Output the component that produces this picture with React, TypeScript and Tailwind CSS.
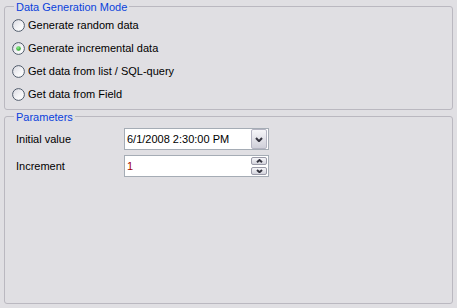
import React from "react";

function Radio({ checked }: { checked?: boolean }) {
  return (
    <svg width="13" height="13" viewBox="0 0 13 13" className="shrink-0">
      <defs>
        <linearGradient id="rfill" x1="0" y1="0" x2="1" y2="1">
          <stop offset="0" stopColor="#d8d8e0" />
          <stop offset="0.6" stopColor="#f6f6f8" />
          <stop offset="1" stopColor="#ffffff" />
        </linearGradient>
        <radialGradient id="rdot" cx="0.4" cy="0.35" r="0.7">
          <stop offset="0" stopColor="#8ff08f" />
          <stop offset="1" stopColor="#1a9a1a" />
        </radialGradient>
      </defs>
      <circle cx="6.5" cy="6.5" r="5.9" fill="url(#rfill)" stroke="#4f5a6a" strokeWidth="1" />
      {checked && <circle cx="6.5" cy="6.5" r="2.3" fill="url(#rdot)" />}
    </svg>
  );
}

function Chevron({ w, h, up, sw = 1.8 }: { w: number; h: number; up?: boolean; sw?: number }) {
  return (
    <svg width={w} height={h} viewBox={`0 0 ${w} ${h}`}>
      {up ? (
        <path d={`M1 ${h - 0.8} L${w / 2} 1 L${w - 1} ${h - 0.8}`} fill="none" stroke="#34343f" strokeWidth={sw} />
      ) : (
        <path d={`M1 1 L${w / 2} ${h - 0.8} L${w - 1} 1`} fill="none" stroke="#34343f" strokeWidth={sw} />
      )}
    </svg>
  );
}

const options = [
  { label: "Generate random data", checked: false },
  { label: "Generate incremental data", checked: true },
  { label: "Get data from list / SQL-query", checked: false },
  { label: "Get data from Field", checked: false },
];

export default function App() {
  return (
    <div className="w-[457px] h-[308px] bg-[#e0dfe3] px-[4px] pb-[4px] flex flex-col font-['Liberation_Sans',Arial,sans-serif] text-[11px] text-black">
      <fieldset className="h-[110px] shrink-0 border border-[#bab8c0] rounded-[3px]">
        <legend className="ml-[9px] px-[2px] pt-[2px] leading-[10px] text-[#0a3fdc]">Data Generation Mode</legend>
        <div className="pt-[2px] pl-[7px] flex flex-col">
          {options.map((o) => (
            <div key={o.label} className="h-[23px] flex items-center gap-[3px]">
              <Radio checked={o.checked} />
              <span className="leading-[13px]">{o.label}</span>
            </div>
          ))}
        </div>
      </fieldset>
      <fieldset className="flex-1 border border-[#bab8c0] rounded-[3px]">
        <legend className="ml-[9px] px-[2px] pt-[2px] leading-[10px] text-[#0a3fdc]">Parameters</legend>
        <div className="pt-[6px] pl-[11px] flex flex-col gap-[5px]">
          <div className="flex items-center">
            <span className="w-[108px] leading-[13px]">Initial value</span>
            <div className="w-[145px] h-[22px] bg-white border border-[#a5acb5] flex items-center pl-[2px] pr-[1px]">
              <span className="flex-1 leading-[13px]">6/1/2008 2:30:00 PM</span>
              <div className="w-[16px] h-[20px] rounded-[2px] border border-[#b4b4c2] bg-gradient-to-b from-[#f6f6f9] to-[#cfcfd9] flex items-center justify-center">
                <Chevron w={8} h={5} sw={2} />
              </div>
            </div>
          </div>
          <div className="flex items-center">
            <span className="w-[108px] leading-[13px]">Increment</span>
            <div className="w-[145px] h-[22px] bg-white border border-[#a5acb5] flex items-center pl-[2px] pr-[1px]">
              <span className="flex-1 leading-[13px] text-[#a00000]">1</span>
              <div className="flex flex-col gap-[2px]">
                <div className="w-[16px] h-[8px] rounded-[2px] border border-[#9a9aa8] bg-gradient-to-b from-[#f6f6f9] to-[#d3d3dc] flex items-center justify-center">
                  <Chevron w={7} h={4} up sw={2} />
                </div>
                <div className="w-[16px] h-[8px] rounded-[2px] border border-[#9a9aa8] bg-gradient-to-b from-[#f6f6f9] to-[#d3d3dc] flex items-center justify-center">
                  <Chevron w={7} h={4} sw={2} />
                </div>
              </div>
            </div>
          </div>
        </div>
      </fieldset>
    </div>
  );
}
